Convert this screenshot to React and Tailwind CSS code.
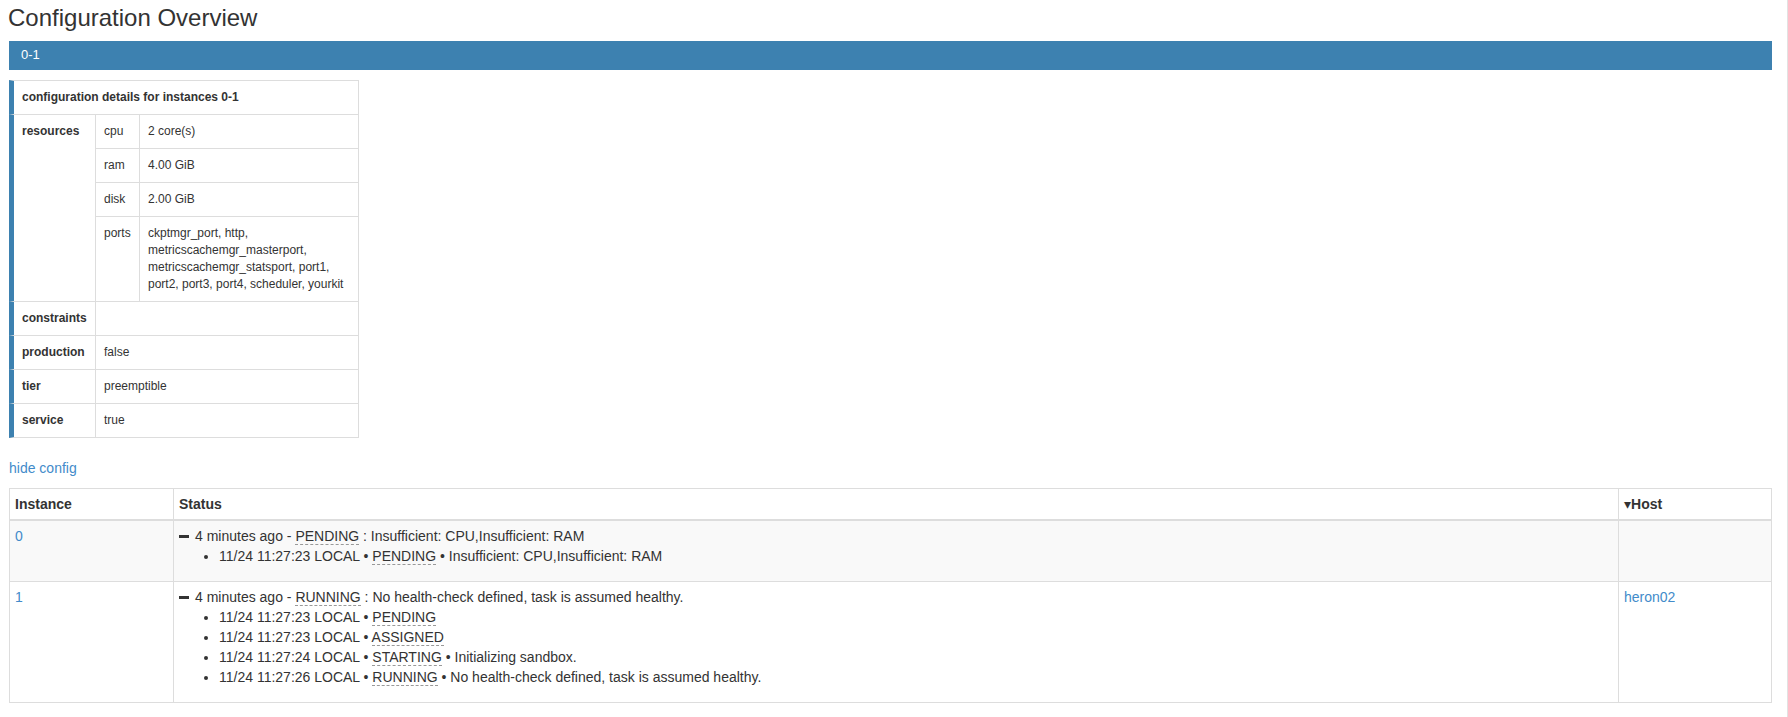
import React from "react";

const BLUE = "border-l-[#3d81b0]";

function Abbr({ children }) {
  return (
    <abbr className="no-underline border-b border-dashed border-[#999] cursor-help" title={children}>
      {children}
    </abbr>
  );
}

function Dash() {
  return <span className="inline-block w-[10px] h-[3px] bg-[#333] align-middle mr-[6px] relative top-[-1px]"></span>;
}

function ConfigTable() {
  const k = "px-[8px] py-[8px] align-top border-t border-[#ddd] border-l-[5px] " + BLUE + " font-bold";
  const m = "px-[8px] py-[8px] align-top border-t border-l border-[#ddd]";
  const v = "px-[8px] py-[8px] align-top border-t border-l border-r border-[#ddd]";
  return (
    <table className="w-[350px] table-fixed border-separate border-spacing-0 text-[12px] leading-[17px] mb-[20px]">
      <colgroup>
        <col className="w-[86px]" />
        <col className="w-[44px]" />
        <col className="w-[220px]" />
      </colgroup>
      <tbody>
        <tr>
          <td colSpan={3} className={"px-[8px] py-[8px] border-t border-r border-[#ddd] border-l-[5px] " + BLUE + " font-bold"}>
            configuration details for instances 0-1
          </td>
        </tr>
        <tr>
          <td rowSpan={4} className={k}>resources</td>
          <td className={m}>cpu</td>
          <td className={v}>2 core(s)</td>
        </tr>
        <tr>
          <td className={m}>ram</td>
          <td className={v}>4.00 GiB</td>
        </tr>
        <tr>
          <td className={m}>disk</td>
          <td className={v}>2.00 GiB</td>
        </tr>
        <tr>
          <td className={m}>ports</td>
          <td className={v}>
            ckptmgr_port, http,
            <br />
            metricscachemgr_masterport,
            <br />
            metricscachemgr_statsport, port1,
            <br />
            port2, port3, port4, scheduler, yourkit
          </td>
        </tr>
        <tr>
          <td className={k}>constraints</td>
          <td colSpan={2} className={v}></td>
        </tr>
        <tr>
          <td className={k}>production</td>
          <td colSpan={2} className={v}>false</td>
        </tr>
        <tr>
          <td className={k}>tier</td>
          <td colSpan={2} className={v}>preemptible</td>
        </tr>
        <tr>
          <td className={k + " border-b"}>service</td>
          <td colSpan={2} className={v + " border-b"}>true</td>
        </tr>
      </tbody>
    </table>
  );
}

function Event({ time, status, msg }) {
  return (
    <li>
      {time} LOCAL • <Abbr>{status}</Abbr>
      {msg ? " • " + msg : ""}
    </li>
  );
}

function StatusTable() {
  const th = "text-left font-bold px-[5px] py-[5px] align-bottom border-t border-l border-b-2 border-[#ddd]";
  const td = "px-[5px] py-[5px] align-top border-l border-[#ddd]";
  return (
    <table className="w-[1763px] table-fixed border-separate border-spacing-0 text-[14px] leading-[20px]">
      <thead>
        <tr>
          <th className={th + " w-[164px]"}>Instance</th>
          <th className={th}>Status</th>
          <th className={th + " border-r w-[154px]"}>
            <span className="font-['DejaVu_Sans',sans-serif] text-[14px] font-normal">▾</span>Host
          </th>
        </tr>
      </thead>
      <tbody>
        <tr className="bg-[#f9f9f9]">
          <td className={td}>
            <a href="#" className="text-[#428bca]">0</a>
          </td>
          <td className={td}>
            <div>
              <Dash />4 minutes ago - <Abbr>PENDING</Abbr> : Insufficient: CPU,Insufficient: RAM
            </div>
            <ul className="list-disc pl-[40px] mb-[10px]">
              <Event time="11/24 11:27:23" status="PENDING" msg="Insufficient: CPU,Insufficient: RAM" />
            </ul>
          </td>
          <td className={td + " border-r"}></td>
        </tr>
        <tr>
          <td className={td + " border-t border-b"}>
            <a href="#" className="text-[#428bca]">1</a>
          </td>
          <td className={td + " border-t border-b"}>
            <div>
              <Dash />4 minutes ago - <Abbr>RUNNING</Abbr> : No health-check defined, task is assumed healthy.
            </div>
            <ul className="list-disc pl-[40px] mb-[10px]">
              <Event time="11/24 11:27:23" status="PENDING" />
              <Event time="11/24 11:27:23" status="ASSIGNED" />
              <Event time="11/24 11:27:24" status="STARTING" msg="Initializing sandbox." />
              <Event time="11/24 11:27:26" status="RUNNING" msg="No health-check defined, task is assumed healthy." />
            </ul>
          </td>
          <td className={td + " border-t border-b border-r"}>
            <a href="#" className="text-[#428bca]">heron02</a>
          </td>
        </tr>
      </tbody>
    </table>
  );
}

export default function App() {
  return (
    <div className="w-[1788px] min-h-[717px] bg-white border-r border-[#e2e2e2] pl-[9px] pr-[15px] pt-[5px] font-['Liberation_Sans',Arial,sans-serif] text-[#333]">
      <h3 className="text-[24px] leading-[26px] font-normal mb-[10px] ml-[-1px]">Configuration Overview</h3>
      <div className="h-[29px] bg-[#3d81b0] text-white text-[13px] leading-[28px] px-[12px]">0-1</div>
      <div className="mt-[10px]">
        <ConfigTable />
      </div>
      <div className="text-[14px] leading-[20px] mb-[10px]">
        <a href="#" className="text-[#428bca]">hide config</a>
      </div>
      <StatusTable />
    </div>
  );
}
